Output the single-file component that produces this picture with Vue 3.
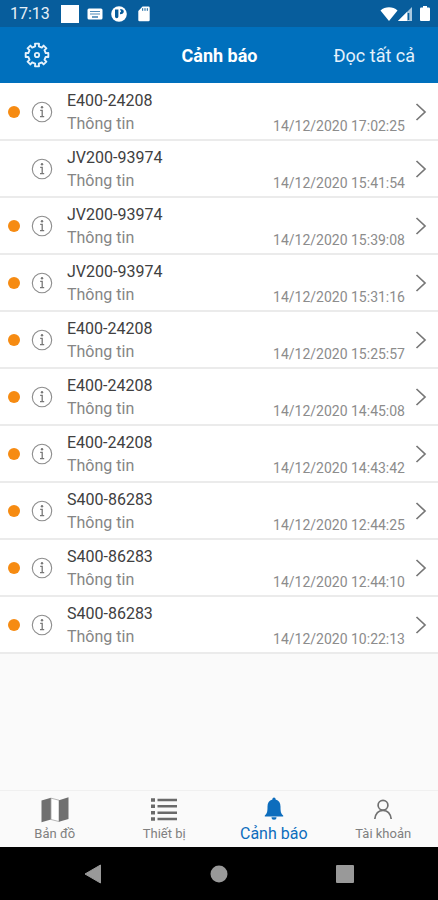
<script setup>
const alerts = [
  { id: 1, device: 'E400-24208', time: '14/12/2020 17:02:25', unread: true },
  { id: 2, device: 'JV200-93974', time: '14/12/2020 15:41:54', unread: false },
  { id: 3, device: 'JV200-93974', time: '14/12/2020 15:39:08', unread: true },
  { id: 4, device: 'JV200-93974', time: '14/12/2020 15:31:16', unread: true },
  { id: 5, device: 'E400-24208', time: '14/12/2020 15:25:57', unread: true },
  { id: 6, device: 'E400-24208', time: '14/12/2020 14:45:08', unread: true },
  { id: 7, device: 'E400-24208', time: '14/12/2020 14:43:42', unread: true },
  { id: 8, device: 'S400-86283', time: '14/12/2020 12:44:25', unread: true },
  { id: 9, device: 'S400-86283', time: '14/12/2020 12:44:10', unread: true },
  { id: 10, device: 'S400-86283', time: '14/12/2020 10:22:13', unread: true },
]

// Outline of the eight-toothed settings gear, centred in a 26 x 26 box.
function gearPath() {
  const point = (radius, degrees) => {
    const a = (degrees * Math.PI) / 180
    return `${(13 + radius * Math.cos(a)).toFixed(2)} ${(13 + radius * Math.sin(a)).toFixed(2)}`
  }
  const points = []
  for (let tooth = 0; tooth < 8; tooth++) {
    const mid = tooth * 45 - 90
    points.push(point(8.9, mid - 12), point(11.5, mid - 10), point(11.5, mid + 10), point(8.9, mid + 12))
  }
  return `M${points.join('L')}Z`
}
const gear = gearPath()
</script>

<template>
  <div class="screen">
    <div class="status">
      <span class="clock">17:13</span>
      <svg class="s-square" width="18" height="18" viewBox="0 0 18 18"><rect width="18" height="18" fill="#fff" /></svg>
      <svg class="s-keyboard" width="16" height="12" viewBox="0 0 16 12">
        <rect x="0.5" y="0.5" width="15" height="11" rx="1.5" fill="#fff" />
        <path d="M3 3.500h10M3 6h10" stroke="#4f8cba" stroke-width="1.200" />
        <path d="M5 9h6" stroke="#075d9c" stroke-width="1.200" />
      </svg>
      <svg class="s-app" width="16" height="16" viewBox="0 0 16 16">
        <circle cx="8" cy="8" r="7.800" fill="#fff" />
        <path d="M4 3.600h3.400v7a1.700 1.700 0 0 1-3.400 0z" fill="#075d9c" />
        <path d="M9 3c2.600 0 3.800 1 3.800 2.600S11.600 8.200 9 8.200V6.200c.8 0 1-.3 1-.7z" fill="#075d9c" />
      </svg>
      <svg class="s-card" width="12" height="16" viewBox="0 0 12 16">
        <path d="M4.500 .5H10.500a1.200 1.200 0 0 1 1.200 1.200V14a1.200 1.200 0 0 1-1.200 1.200H1.500A1.200 1.200 0 0 1 .3 14V5z" fill="#fff" />
        <path d="M4.700 2.200v2.600M7 2.200v2.600M9.300 2.200v2.600" stroke="#075d9c" stroke-width="1" />
      </svg>
      <svg class="s-wifi" width="18" height="14" viewBox="0 0 18 14"><path d="M.5 3.600C5 -.8 13 -.8 17.500 3.600L9 14z" fill="#fff" /></svg>
      <svg class="s-signal" width="14" height="14" viewBox="0 0 14 14">
        <path d="M0 14L14 0V14z" fill="#a9c9e0" />
        <path d="M0 14L9 5V14z" fill="#fff" />
        <path d="M10.500 6v7" stroke="#075d9c" stroke-width="1.600" />
      </svg>
      <svg class="s-battery" width="10" height="15" viewBox="0 0 10 15"><path d="M3 0h4v1.500h1.800A1.200 1.200 0 0 1 10 2.700V14a1 1 0 0 1-1 1H1a1 1 0 0 1-1-1V2.700A1.200 1.200 0 0 1 1.200 1.500H3z" fill="#fff" /></svg>
    </div>

    <header class="bar">
      <button class="settings" type="button" aria-label="Cài đặt">
        <svg width="26" height="26" viewBox="0 0 26 26" fill="none" stroke="#e4f1fb" stroke-linejoin="round">
          <path :d="gear" stroke-width="1.900" />
          <circle cx="13" cy="13" r="2.200" stroke-width="1.800" />
        </svg>
      </button>
      <h1>Cảnh báo</h1>
      <button class="read-all" type="button">Đọc tất cả</button>
    </header>

    <main>
      <ul class="list">
        <li v-for="alert in alerts" :key="alert.id">
          <a class="row" href="#">
            <span class="dot" :class="{ read: !alert.unread }"></span>
            <svg class="info" width="22" height="22" viewBox="0 0 22 22" fill="none" stroke="#8c8c8c">
              <circle cx="11" cy="11" r="9.700" stroke-width="1.100" />
              <circle cx="11" cy="6.300" r="1.200" fill="#777" stroke="none" />
              <path d="M9.200 9.300h2v6.200M9 15.700h4.200" stroke="#777" stroke-width="1.300" />
            </svg>
            <span class="text">
              <span class="device">{{ alert.device }}</span>
              <span class="kind">Thông tin</span>
            </span>
            <time>{{ alert.time }}</time>
            <svg class="chevron" width="12" height="20" viewBox="0 0 12 20"><path d="M1.500 2L10 10L1.500 18" fill="none" stroke="#777" stroke-width="1.700" /></svg>
          </a>
        </li>
      </ul>
    </main>

    <nav class="tabs">
      <a href="#">
        <svg width="28" height="26" viewBox="0 0 28 26">
          <path d="M.5 3.500L10 .8V22.500L.5 25.200z" fill="#707070" />
          <path d="M10 1.200L18 3.200V24.500L10 22.500z" fill="#fff" stroke="#a5a5a5" stroke-width=".8" />
          <path d="M18 3.200L27.500 .3V22L18 24.800z" fill="#707070" />
        </svg>
        <span>Bản đồ</span>
      </a>
      <a href="#">
        <svg width="28" height="26" viewBox="0 0 28 26" stroke="#6a6a6a">
          <path d="M1 3h4M1 9.300h4M1 15.700h4M1 22h4" stroke-width="3.600" />
          <path d="M7.500 3H27M7.500 9.300H27M7.500 15.700H27M7.500 22H27" stroke-width="2.600" />
        </svg>
        <span>Thiết bị</span>
      </a>
      <a class="active" href="#">
        <svg width="20" height="26" viewBox="0 0 20 26" fill="#0d6dbd">
          <path d="M10 .5a1.600 1.600 0 0 1 1.600 1.600v.5C15 3.500 16.500 6 16.500 9.500c0 5 .3 7 2.700 9v.9H.8v-.9c2.400-2 2.700-4 2.700-9 0-3.500 1.500-6 4.900-6.900v-.5A1.600 1.600 0 0 1 10 .5z" />
          <path d="M7.500 20.200h5a2.500 2.500 0 0 1-5 0z" />
        </svg>
        <span>Cảnh báo</span>
      </a>
      <a href="#">
        <svg width="20" height="26" viewBox="0 0 20 26" fill="none" stroke="#707070" stroke-width="1.700">
          <circle cx="10" cy="8.200" r="4.900" />
          <path d="M1.800 22C2.500 16.800 5.500 13.500 10 13.500s7.500 3.300 8.200 8.500" />
        </svg>
        <span>Tài khoản</span>
      </a>
    </nav>

    <div class="system">
      <button type="button" aria-label="Quay lại"><svg width="18" height="20" viewBox="0 0 18 20"><path d="M1 10L16.500 1V19z" fill="#999" stroke="#999" stroke-linejoin="round" /></svg></button>
      <button type="button" aria-label="Trang chủ"><svg width="18" height="18" viewBox="0 0 18 18"><circle cx="9" cy="9" r="8.500" fill="#999" /></svg></button>
      <button type="button" aria-label="Ứng dụng gần đây"><svg width="18" height="18" viewBox="0 0 18 18"><rect width="18" height="18" rx="1" fill="#999" /></svg></button>
    </div>
  </div>
</template>

<style>
body {
  margin: 0;
}
</style>

<style scoped>
.screen {
  min-height: 100vh;
  display: flex;
  flex-direction: column;
  background: #fafafa;
  font-family: Roboto, "Noto Sans", sans-serif;
  font-size: 16px;
  color: #404040;
}
button {
  border: 0;
  padding: 0;
  background: none;
  color: inherit;
  font: inherit;
}
a {
  color: inherit;
  text-decoration: none;
}
svg {
  display: block;
  flex: none;
}
.status {
  display: flex;
  align-items: center;
  height: 27px;
  padding: 0 8px 0 10px;
  background: #075d9c;
  color: #e6f0f7;
}
.clock {
  margin-right: 11px;
}
.s-square {
  margin-right: 8px;
}
.s-keyboard {
  margin-right: 8px;
}
.s-app {
  margin-right: 11px;
}
.s-wifi {
  margin-left: auto;
}
.s-signal {
  margin-right: 8px;
}
.bar {
  display: grid;
  grid-template-columns: 1fr auto 1fr;
  align-items: center;
  height: 56px;
  padding: 0 23px 0 24px;
  background: #0070bd;
  color: #fff;
}
.settings {
  justify-self: start;
}
.bar h1 {
  margin: 0;
  font-size: 18px;
  font-weight: 700;
}
.read-all {
  justify-self: end;
  font-size: 18px;
  color: #e4f1fb;
}
main {
  flex: 1;
}
.list {
  margin: 0;
  padding: 1px 0 0;
  background: #fff;
  list-style: none;
}
.row {
  display: flex;
  align-items: center;
  height: 55px;
  padding: 0 11px 0 8px;
  border-bottom: 2px solid #ebebeb;
}
.dot {
  flex: none;
  width: 12px;
  height: 12px;
  margin-right: 11px;
  border-radius: 50%;
  background: #f68b12;
}
.dot.read {
  visibility: hidden;
}
.info {
  margin-right: 14px;
}
.text {
  flex: 1;
  display: flex;
  flex-direction: column;
  padding-top: 1px;
  line-height: 23px;
}
.kind {
  color: #858585;
}
time {
  align-self: flex-end;
  margin-right: 10px;
  padding-bottom: 4px;
  font-size: 14px;
  line-height: 18px;
  color: #8c8c8c;
}
.tabs {
  display: grid;
  grid-template-columns: repeat(4, 1fr);
  height: 56px;
  border-top: 1px solid #f0f0f0;
}
.tabs a {
  display: flex;
  flex-direction: column;
  align-items: center;
  justify-content: flex-end;
  gap: 1px;
  padding-bottom: 3px;
  font-size: 13px;
  line-height: 20px;
  color: #808080;
}
.tabs .active {
  font-size: 16px;
  color: #0d6dbd;
}
.system {
  display: flex;
  align-items: center;
  justify-content: center;
  gap: 108px;
  height: 53px;
  background: #000;
}
</style>
